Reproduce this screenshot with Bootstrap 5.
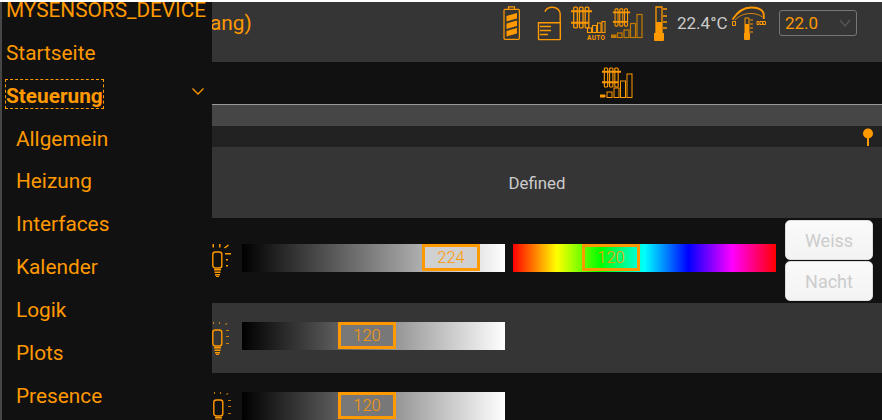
<!DOCTYPE html>
<html lang="de">
<head>
  <meta charset="UTF-8" />
  <meta name="viewport" content="width=device-width, initial-scale=1.0" />
  <title>Steuerung</title>
  <link href="https://cdn.jsdelivr.net/npm/bootstrap@5.3.2/dist/css/bootstrap.min.css" rel="stylesheet" />
  <style>
    body {
      height: 100vh;
      background: #111;
      font-family: Roboto, "Liberation Sans", sans-serif;
      color: #f90;
      border-top: 2px solid #fff;
      position: relative;
    }

    /* sidebar lies over the page */
    .side-menu {
      position: absolute;
      top: 0;
      left: 0;
      bottom: 0;
      width: 212px;
      background: #111;
      border-left: 2px solid #464646;
      font-size: 20.8px;
      z-index: 5;
    }
    .side-title { height: 30px; padding-left: 4px; line-height: 17px; white-space: nowrap; }
    .side-item { height: 42.85px; padding-left: 4px; color: #f90; text-decoration: none; }
    .side-sub { padding-left: 14px; }
    .side-open { outline: 1px dashed #f90; font-weight: 700; line-height: 24px; padding: 4px 0 0; margin-bottom: 4px; }
    .side-item svg { margin-right: 8px; margin-bottom: 10px; }

    .page-main { padding-left: 212px; }
    .head-bar { height: 60px; background: #353535; padding: 4px 25px 0 0; }
    .head-title { font-size: 20.8px; line-height: 34px; margin-left: -2px; }
    .head-temp { color: #ccc; font-size: 17px; line-height: 34px; width: 54px; }
    .head-select {
      width: 78px;
      height: 26px;
      margin-top: 4px;
      margin-left: 12px;
      padding: 0 0 0 5px;
      color: #f90;
      font-size: 17px;
      line-height: 24px;
      background-color: #353535;
      border: 1px solid #777;
      border-radius: 3px;
      background-position: right 5px center;
      background-size: 12px 8px;
      background-image: url("data:image/svg+xml,%3csvg xmlns='http://www.w3.org/2000/svg' viewBox='0 0 12 8'%3e%3cpath fill='none' stroke='%23555' stroke-width='1.5' d='M1 1l5 6 5-6'/%3e%3c/svg%3e");
    }
    .tab-bar { height: 42px; padding-left: 388px; }
    .rule-bar { height: 22px; background: #464646; border-top: 1px solid #999; }
    .pin-bar { height: 21px; background: #222; padding-right: 8px; }
    .defined-bar { height: 71px; background: #353535; color: #ccc; font-size: 16.8px; padding-top: 2px; margin-left: -20px; }
    .light-row { height: 70px; }
    .light-row-first { height: 85px; }
    .light-row-first .light-slider { margin-bottom: 6px; }
    .row-dark { background: #353535; }
    .light-bulb { width: 30px; flex: none; }
    .light-slider { position: relative; width: 263px; height: 28px; flex: none; margin-bottom: 4px; }
    .slider-gray { background: linear-gradient(to right, #000, #fff); }
    .slider-hue { margin-left: 8px; background: linear-gradient(to right, #f00, #ff0 16.67%, #0f0 33.33%, #0ff 50%, #00f 66.67%, #f0f 83.33%, #f00); }
    .slider-handle {
      position: absolute;
      top: 0;
      width: 58px;
      height: 27px;
      border: 3px solid #f90;
      text-align: center;
      font-size: 16.6px;
      font-weight: 300;
      line-height: 21px;
    }
    .light-btns { margin-left: 9px; width: 88px; gap: 1px; }
    .light-btn {
      height: 40px;
      padding: 0;
      font-size: 18px;
      color: #ccc;
      background: linear-gradient(#fafafa, #f3f3f3);
      border: 1px solid #ddd;
      border-radius: 5px;
    }
    .icon-dim { opacity: .75; }
  </style>
</head>
<body class="overflow-hidden">

  <svg width="0" height="0" class="position-absolute">
    <symbol id="radiator" viewBox="0 0 20 22">
      <g fill="none" stroke="#f90" stroke-width="1.2">
        <rect x="2.5" y="1" width="3.5" height="20" rx="1" />
        <rect x="8" y="1" width="3.5" height="20" rx="1" />
        <rect x="13.5" y="1" width="3.5" height="20" rx="1" />
      </g>
      <path fill="#f90" d="M0 4h20v2H0zM0 15h17v2H0z" />
    </symbol>
    <symbol id="bulb-a" viewBox="0 0 20 33">
      <g fill="none" stroke="#f90">
        <rect x=".8" y="8" width="9" height="16" rx="2.5" stroke-width="1.4" />
      </g>
      <path fill="#f90" d="M2 25h7v1.5H2zM2.5 27.5h6V29h-6zM3 30h5v1.5H3zM4 32h3v1H4z" />
    </symbol>
  </svg>

  <!-- Sidebar -->
  <nav class="side-menu d-flex flex-column">
    <div class="side-title">MYSENSORS_DEVICE</div>
    <a class="side-item d-flex align-items-center" href="#">Startseite</a>
    <a class="side-item d-flex align-items-center justify-content-between" href="#">
      <span class="side-open">Steuerung</span>
      <svg width="12" height="7" viewBox="0 0 12 7"><path fill="none" stroke="#f90" stroke-width="1.3" d="M.5.5L6 6 11.5.5" /></svg>
    </a>
    <a class="side-item side-sub d-flex align-items-center" href="#">Allgemein</a>
    <a class="side-item side-sub d-flex align-items-center" href="#">Heizung</a>
    <a class="side-item side-sub d-flex align-items-center" href="#">Interfaces</a>
    <a class="side-item side-sub d-flex align-items-center" href="#">Kalender</a>
    <a class="side-item side-sub d-flex align-items-center" href="#">Logik</a>
    <a class="side-item side-sub d-flex align-items-center" href="#">Plots</a>
    <a class="side-item side-sub d-flex align-items-center" href="#">Presence</a>
  </nav>

  <div class="page-main">
    <!-- Header -->
    <header class="head-bar d-flex align-items-start">
      <div class="head-title flex-grow-1">ang)</div>

      <!-- battery -->
      <svg class="me-3" width="18" height="36" viewBox="0 0 18 36">
        <path fill="none" stroke="#f90" stroke-width="1.2" d="M5.5 3.3V.9h6v2.4M2 3.3h13.4a1 1 0 0 1 1 1v28a1 1 0 0 1-1 1H2a1 1 0 0 1-1-1v-28a1 1 0 0 1 1-1z" />
        <path fill="#f90" d="M3.5 10l10.500-3v5.500l-10.500 3zM3.5 17.500l10.500-3v5.500l-10.500 3zM3.5 25l10.500-3v5.500l-10.500 3z" />
      </svg>

      <!-- open lock -->
      <svg class="me-2" width="26" height="36" viewBox="0 0 26 36">
        <path fill="none" stroke="#f90" stroke-width="1.4" d="M8 5.7C9 2.5 12 1.2 15.5 1.2c4 0 7.7 2.8 7.7 7v8.800M1.500 16.800H23.300v16.100a.7.7 0 0 1-.7.7H2.200a.7.7 0 0 1-.7-.7z" />
        <path fill="none" stroke="#f90" stroke-width="1.4" d="M3 20.500h11M3 24.500h11M3 28.500h8" />
      </svg>

      <!-- radiator auto -->
      <svg width="36" height="36" viewBox="0 0 36 36">
        <use href="#radiator" x="0" y="0" width="21" height="23" />
        <g fill="none" stroke="#f90" stroke-width="1.1">
          <rect x="16.500" y="22" width="4" height="4.500" />
          <rect x="21.500" y="19.500" width="4" height="7" />
          <rect x="26.500" y="17" width="3.500" height="9.500" />
          <rect x="31" y="15.500" width="3" height="11" />
        </g>
        <text x="16" y="33.500" fill="#f90" font-size="6.500" font-weight="700" font-family="Roboto, sans-serif" textLength="18">AUTO</text>
      </svg>

      <!-- radiator bars -->
      <svg class="ms-1" width="34" height="36" viewBox="0 0 34 36">
        <use href="#radiator" x="1" y="2" width="19" height="19" />
        <g fill="none" stroke="#c47a00" stroke-width="1.2">
          <path fill="#c47a00" d="M0 29h5v2.500H0z" />
          <rect x="6.500" y="27" width="4.500" height="4.500" />
          <rect x="13" y="24" width="5" height="7.500" />
          <rect x="19.500" y="17.500" width="5" height="14" />
          <rect x="26" y="8.500" width="5" height="23" />
        </g>
      </svg>

      <!-- thermometer -->
      <svg class="ms-2" width="16" height="36" viewBox="0 0 16 36">
        <path fill="none" stroke="#f90" stroke-width="1.3" d="M3 1h6v27H3zM10 3h4M10 10h4M10 16h4M10 22h4" />
        <path fill="#f90" d="M3 16h6v12H3zM1 27h10v7a1 1 0 0 1-1 1H2a1 1 0 0 1-1-1z" />
      </svg>

      <div class="head-temp ms-2">22.4°C</div>

      <!-- gauge -->
      <svg width="36" height="36" viewBox="0 0 36 36">
        <path fill="none" stroke="#f90" stroke-width="1.800" d="M1.500 13.500C7 5 13 1.500 20 1.500c6 0 10.500 2 12 4.500 1 2 1 4 .7 7" />
        <path fill="none" stroke="#f90" stroke-width=".8" d="M4 14C9 9 14 7.500 20 7.500c4 0 8 1 11.500 3.500" />
        <path fill="none" stroke="#f90" stroke-width="1" d="M1.500 15.500h3v4h-3zM26 15.500h2v3h-2zM29 15.500h2.500v3H29zM32 15.500h2.500v3H32z" />
        <path fill="none" stroke="#f90" stroke-width="1" d="M14 12h4v16h-4zM19 14h3M19 18h3M19 22h3M19 26h3" />
        <path fill="#f90" d="M14 18h4v10h-4zM13 27h6v6a1 1 0 0 1-1 1h-4a1 1 0 0 1-1-1z" />
      </svg>

      <select class="form-select head-select" aria-label="Solltemperatur">
        <option>22.0</option>
      </select>
    </header>

    <!-- Mode row -->
    <div class="tab-bar d-flex align-items-center">
      <svg width="34" height="32" viewBox="0 0 34 32">
        <use href="#radiator" x="1" y="0" width="21" height="21" />
        <g fill="none" stroke="#f90" stroke-width="1">
          <path fill="#f90" d="M0 28h5v2H0z" />
          <rect x="7" y="25" width="5" height="5.500" />
          <rect x="14" y="21" width="5" height="9.500" />
          <rect x="20.500" y="14" width="5" height="16.500" />
          <rect x="27" y="7" width="5" height="23.500" />
        </g>
      </svg>
    </div>

    <div class="rule-bar"></div>

    <div class="pin-bar d-flex justify-content-end align-items-center">
      <svg width="12" height="18" viewBox="0 0 12 18">
        <path fill="#f90" d="M5 10h2v8H5z" />
        <circle cx="6" cy="5.500" r="5" fill="#f90" />
      </svg>
    </div>

    <div class="defined-bar d-flex align-items-center justify-content-center">Defined</div>

    <!-- Light rows -->
    <div class="light-row-first d-flex align-items-center">
      <div class="light-bulb">
        <svg class="d-block" width="22" height="33" viewBox="0 0 22 33">
          <use href="#bulb-a" x="0" y="0" width="20" height="33" />
          <path fill="#f90" d="M.5 0h1.500v3.500H.5zM7 0h1.500v3.500H7zM12 3.500l4-3 1 1-4 3zM13 9h6v1.500h-6zM14 15h2v1.500h-2zM14 21h2v1.500h-2z" />
        </svg>
      </div>
      <div class="light-slider slider-gray">
        <div class="slider-handle" style="left: 180px; background: rgb(208, 208, 208);">224</div>
      </div>
      <div class="light-slider slider-hue">
        <div class="slider-handle" style="left: 69px;">120</div>
      </div>
      <div class="light-btns d-flex flex-column">
        <button type="button" class="btn light-btn">Weiss</button>
        <button type="button" class="btn light-btn">Nacht</button>
      </div>
    </div>

    <div class="light-row row-dark d-flex align-items-center">
      <div class="light-bulb">
        <svg class="d-block" width="22" height="33" viewBox="0 0 22 33">
          <use href="#bulb-a" x="0" y="0" width="20" height="33" />
          <path class="icon-dim" fill="#f90" d="M1 0h1v2H1zM7 0h1v2H7zM13 2l2-1 .5.7-2 1.300zM14 8h3v1h-3zM14 14h3v1h-3zM14 21h3v1h-3z" />
        </svg>
      </div>
      <div class="light-slider slider-gray">
        <div class="slider-handle" style="left: 96px; background: rgb(120, 120, 120);">120</div>
      </div>
    </div>

    <div class="light-row d-flex align-items-center">
      <div class="light-bulb">
        <svg class="d-block" width="24" height="33" viewBox="0 0 24 33">
          <use href="#bulb-a" x="0" y="0" width="22" height="33" />
          <path class="icon-dim" fill="#f90" d="M2 0h1v2H2zM8 0h1v2H8zM14 2l2-1 .5.7-2 1.300zM16 8h3v1h-3zM16 14h3v1h-3zM16 21h3v1h-3z" />
        </svg>
      </div>
      <div class="light-slider slider-gray">
        <div class="slider-handle" style="left: 96px; background: rgb(120, 120, 120);">120</div>
      </div>
    </div>
  </div>

  <script src="https://cdn.jsdelivr.net/npm/bootstrap@5.3.2/dist/js/bootstrap.bundle.min.js"></script>
</body>
</html>
